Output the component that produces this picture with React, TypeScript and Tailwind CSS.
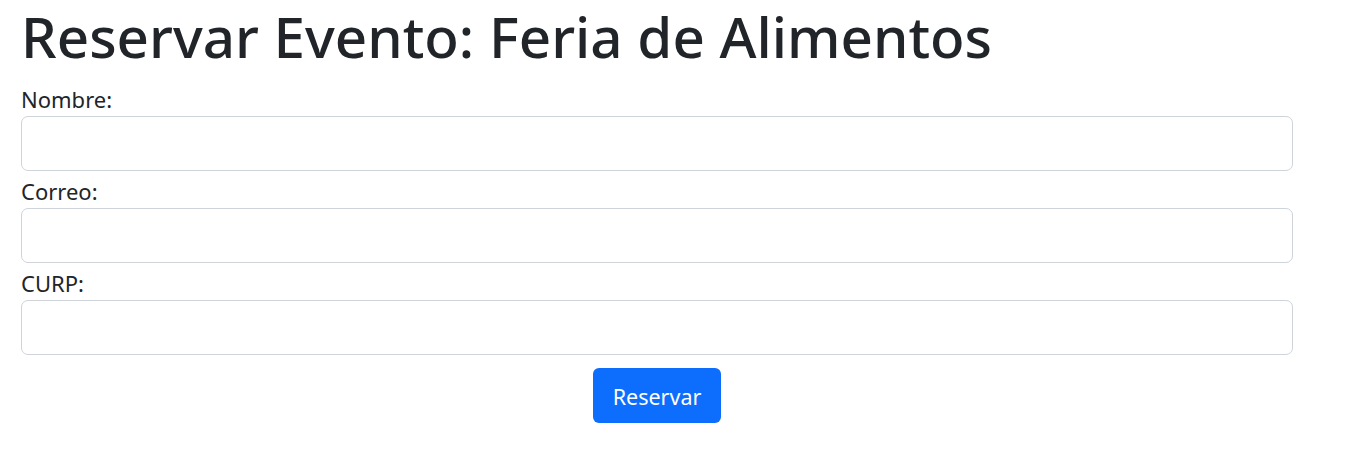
export default function App() {
  return (
    <div className="min-h-screen bg-white px-[21px] font-['Noto_Sans',sans-serif] text-[#212529]">
      <div className="w-[1272px]">
        <h1 className="h-[79px] text-[56.5px] font-medium leading-[74px]">Reservar Evento: Feria de Alimentos</h1>
        <form className="flex flex-col" onSubmit={(e) => e.preventDefault()}>
          {['Nombre:', 'Correo:', 'CURP:'].map((label) => (
            <div key={label} className="flex flex-col">
              <label className="h-[37px] text-[22px] leading-[40px]">{label}</label>
              <input
                type="text"
                className="h-[55px] w-full rounded-[7px] border border-[#ced4da] bg-white px-3 text-[20px] outline-none"
              />
            </div>
          ))}
          <div className="mt-[13px] flex justify-center">
            <button
              type="submit"
              className="h-[55px] w-[128px] rounded-[6px] bg-[#0d6efd] pt-[3px] text-[21.5px] text-white"
            >
              Reservar
            </button>
          </div>
        </form>
      </div>
    </div>
  );
}
